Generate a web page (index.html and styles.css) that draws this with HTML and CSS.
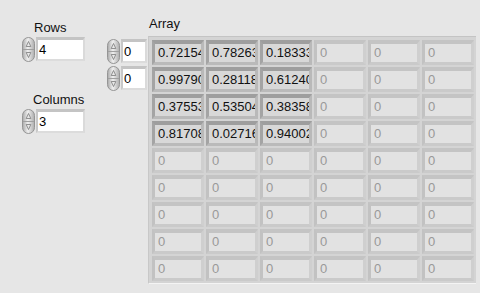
FILE: index.html
```html
<!DOCTYPE html>
<html>
<head>
<meta charset="utf-8">
<link rel="stylesheet" href="styles.css">
</head>
<body>
<div class="panel">
  <div class="left">
    <div class="label rows-label">Rows</div>
    <div class="num">
      <svg class="spin" width="13" height="25" viewBox="0 0 13 25"><defs><linearGradient id="g1" x1="0" x2="1"><stop offset="0" stop-color="#a8a8a8"/><stop offset=".45" stop-color="#f0f0f0"/><stop offset="1" stop-color="#acacac"/></linearGradient></defs><rect x="0.5" y="0.5" width="12" height="24" rx="6" fill="url(#g1)" stroke="#959595"/><line x1="1" y1="12.5" x2="12" y2="12.5" stroke="#a0a0a0"/><path d="M6.5 4.5 L8.8 9.5 H4.2 Z" fill="#e8e8e8" stroke="#7a7a7a" stroke-width=".8"/><path d="M6.5 20.5 L8.8 15.5 H4.2 Z" fill="#e8e8e8" stroke="#7a7a7a" stroke-width=".8"/></svg>
      <div class="box wide">4</div>
    </div>
    <div class="label cols-label">Columns</div>
    <div class="num">
      <svg class="spin" width="13" height="25" viewBox="0 0 13 25"><defs><linearGradient id="g2" x1="0" x2="1"><stop offset="0" stop-color="#a8a8a8"/><stop offset=".45" stop-color="#f0f0f0"/><stop offset="1" stop-color="#acacac"/></linearGradient></defs><rect x="0.5" y="0.5" width="12" height="24" rx="6" fill="url(#g2)" stroke="#959595"/><line x1="1" y1="12.5" x2="12" y2="12.5" stroke="#a0a0a0"/><path d="M6.5 4.5 L8.8 9.5 H4.2 Z" fill="#e8e8e8" stroke="#7a7a7a" stroke-width=".8"/><path d="M6.5 20.5 L8.8 15.5 H4.2 Z" fill="#e8e8e8" stroke="#7a7a7a" stroke-width=".8"/></svg>
      <div class="box wide">3</div>
    </div>
  </div>
  <div class="array">
    <div class="array-label label">Array</div>
    <div class="indices">
      <div class="num">
        <svg class="spin" width="13" height="25" viewBox="0 0 13 25"><defs><linearGradient id="g3" x1="0" x2="1"><stop offset="0" stop-color="#a8a8a8"/><stop offset=".45" stop-color="#f0f0f0"/><stop offset="1" stop-color="#acacac"/></linearGradient></defs><rect x="0.5" y="0.5" width="12" height="24" rx="6" fill="url(#g3)" stroke="#959595"/><line x1="1" y1="12.5" x2="12" y2="12.5" stroke="#a0a0a0"/><path d="M6.5 4.5 L8.8 9.5 H4.2 Z" fill="#e8e8e8" stroke="#7a7a7a" stroke-width=".8"/><path d="M6.5 20.5 L8.8 15.5 H4.2 Z" fill="#e8e8e8" stroke="#7a7a7a" stroke-width=".8"/></svg>
        <div class="box narrow">0</div>
      </div>
      <div class="num">
        <svg class="spin" width="13" height="25" viewBox="0 0 13 25"><defs><linearGradient id="g4" x1="0" x2="1"><stop offset="0" stop-color="#a8a8a8"/><stop offset=".45" stop-color="#f0f0f0"/><stop offset="1" stop-color="#acacac"/></linearGradient></defs><rect x="0.5" y="0.5" width="12" height="24" rx="6" fill="url(#g4)" stroke="#959595"/><line x1="1" y1="12.5" x2="12" y2="12.5" stroke="#a0a0a0"/><path d="M6.5 4.5 L8.8 9.5 H4.2 Z" fill="#e8e8e8" stroke="#7a7a7a" stroke-width=".8"/><path d="M6.5 20.5 L8.8 15.5 H4.2 Z" fill="#e8e8e8" stroke="#7a7a7a" stroke-width=".8"/></svg>
        <div class="box narrow">0</div>
      </div>
    </div>
    <div class="frame">
      <div class="cell on">0.72154</div><div class="cell on">0.78263</div><div class="cell on">0.18333</div><div class="cell">0</div><div class="cell">0</div><div class="cell">0</div>
      <div class="cell on">0.99790</div><div class="cell on">0.28118</div><div class="cell on">0.61240</div><div class="cell">0</div><div class="cell">0</div><div class="cell">0</div>
      <div class="cell on">0.37553</div><div class="cell on">0.53504</div><div class="cell on">0.38358</div><div class="cell">0</div><div class="cell">0</div><div class="cell">0</div>
      <div class="cell on">0.81708</div><div class="cell on">0.02716</div><div class="cell on">0.94002</div><div class="cell">0</div><div class="cell">0</div><div class="cell">0</div>
      <div class="cell">0</div><div class="cell">0</div><div class="cell">0</div><div class="cell">0</div><div class="cell">0</div><div class="cell">0</div>
      <div class="cell">0</div><div class="cell">0</div><div class="cell">0</div><div class="cell">0</div><div class="cell">0</div><div class="cell">0</div>
      <div class="cell">0</div><div class="cell">0</div><div class="cell">0</div><div class="cell">0</div><div class="cell">0</div><div class="cell">0</div>
      <div class="cell">0</div><div class="cell">0</div><div class="cell">0</div><div class="cell">0</div><div class="cell">0</div><div class="cell">0</div>
      <div class="cell">0</div><div class="cell">0</div><div class="cell">0</div><div class="cell">0</div><div class="cell">0</div><div class="cell">0</div>
    </div>
  </div>
</div>
</body>
</html>
```

FILE: styles.css
```css
html, body {
  margin: 0;
  padding: 0;
  background: #e6e6e6;
  width: 480px;
  height: 293px;
  overflow: hidden;
  font-family: "Liberation Sans", Arial, sans-serif;
  font-size: 13px;
  color: #000;
}
.panel {
  display: flex;
  padding-left: 22px;
}
.left {
  width: 85px;
  padding-top: 21px;
  display: flex;
  flex-direction: column;
}
.label {
  line-height: 14px;
  height: 14px;
  font-size: 13px;
  color: #111;
}
.rows-label {
  margin-left: 12px;
  margin-bottom: 2px;
}
.cols-label {
  margin-left: 11px;
  margin-top: 31px;
  margin-bottom: 2px;
}
.num {
  display: flex;
  align-items: flex-start;
  height: 25px;
}
.spin {
  display: block;
  flex: none;
}
.box {
  box-sizing: border-box;
  height: 24px;
  background: #fff;
  border-style: solid;
  border-width: 3px 2px 2px 2px;
  border-color: #c4c4c4 #dadada #dcdcdc #c8c8c8;
  padding: 2px 0 0 1px;
  line-height: 15px;
  font-size: 13px;
  margin-left: 1px;
}
.wide { width: 49px; }
.narrow { width: 26px; }
.array {
  display: grid;
  grid-template-columns: 41px auto;
  grid-template-rows: 36px auto;
}
.array-label {
  grid-column: 2;
  grid-row: 1;
  padding-top: 17px;
  margin-left: 1px;
}
.indices {
  grid-column: 1;
  grid-row: 2;
  padding-top: 3px;
  display: flex;
  flex-direction: column;
  gap: 2px;
}
.frame {
  grid-column: 2;
  grid-row: 2;
  display: grid;
  grid-template-columns: repeat(6, 52px);
  grid-auto-rows: 25px;
  gap: 2px;
  padding: 3px;
  background: #d4d4d4;
  border-top: 1px solid #c4c4c4;
  border-left: 1px solid #c8c8c8;
  border-bottom: 1px solid #f4f4f4;
  box-sizing: border-box;
  width: 328px;
  height: 248px;
}
.cell {
  box-sizing: border-box;
  border-style: solid;
  border-width: 4px 3px 3px 3px;
  border-color: #c4c4c4 #cfcfcf #cacaca #c2c2c2;
  background: #e2e2e2;
  color: #999;
  padding: 1px 0 0 3px;
  line-height: 15px;
  font-size: 13px;
  overflow: hidden;
  white-space: nowrap;
}
.cell.on {
  border-color: #9e9e9e #b9b9b9 #bababa #a4a4a4;
  background: #d8d8d8;
  color: #111;
}
```
